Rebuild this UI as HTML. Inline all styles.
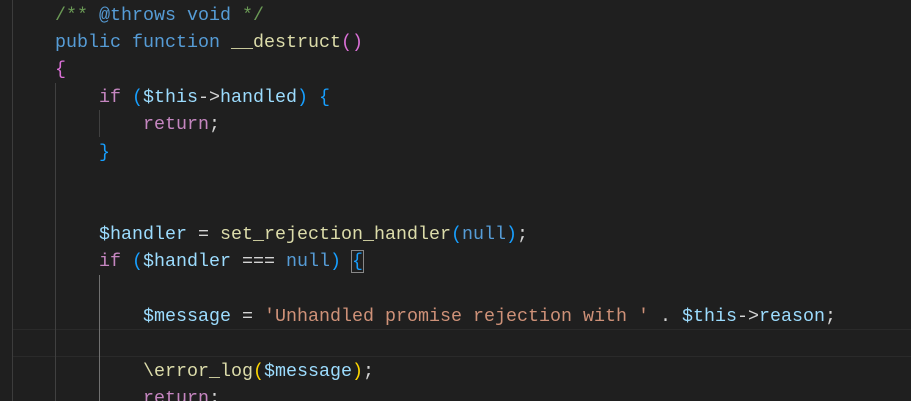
<!DOCTYPE html>
<html><head><meta charset="utf-8"><style>
html,body{margin:0;padding:0;background:#1f1f1f;width:911px;height:401px;overflow:hidden}
.ed{position:relative;width:911px;height:401px;font-family:"Liberation Mono",monospace;font-size:18.33px;}
.l{position:absolute;left:11px;height:27.4px;line-height:27.4px;white-space:pre;color:#d4d4d4;margin-top:1.5px}
.g{position:absolute;width:1px;background:#404040}
.c{color:#6a9955}.k{color:#569cd6}.f{color:#dcdcaa}.p{color:#da70d6}.b{color:#179fff}.y{color:#ffd700}
.m{color:#c586c0}.v{color:#9cdcfe}.s{color:#ce9178}
.cur{position:absolute;left:12px;right:0;top:329px;height:26px;border-top:1.5px solid #2a2a2a;border-bottom:1.5px solid #2a2a2a}
.bx{outline:1px solid #888;}
</style></head><body><div class="ed">
<div class="cur"></div>
<div class="g" style="left:12px;top:0;height:401px;background:#3c3c3c"></div>
<div class="g" style="left:55px;top:83px;height:318px"></div>
<div class="g" style="left:99px;top:110px;height:27px"></div>
<div class="g" style="left:99px;top:275px;height:126px;background:#707070"></div>
<div class="l" style="top:0px">    <span class="c">/** </span><span class="k">@throws</span><span class="c"> </span><span class="k">void</span><span class="c"> */</span></div>
<div class="l" style="top:27.4px">    <span class="k">public function</span> <span class="f">__destruct</span><span class="p">()</span></div>
<div class="l" style="top:54.8px">    <span class="p">{</span></div>
<div class="l" style="top:82.2px">        <span class="m">if</span> <span class="b">(</span><span class="v">$this</span>-&gt;<span class="v">handled</span><span class="b">)</span> <span class="b">{</span></div>
<div class="l" style="top:109.6px">            <span class="m">return</span>;</div>
<div class="l" style="top:137px">        <span class="b">}</span></div>
<div class="l" style="top:219.2px">        <span class="v">$handler</span> = <span class="f">set_rejection_handler</span><span class="b">(</span><span class="k">null</span><span class="b">)</span>;</div>
<div class="l" style="top:246.6px">        <span class="m">if</span> <span class="b">(</span><span class="v">$handler</span> === <span class="k">null</span><span class="b">)</span> <span class="b bx">{</span></div>
<div class="l" style="top:301.4px">            <span class="v">$message</span> = <span class="s">'Unhandled promise rejection with '</span> . <span class="v">$this</span>-&gt;<span class="v">reason</span>;</div>
<div class="l" style="top:356.2px">            <span class="f">\error_log</span><span class="y">(</span><span class="v">$message</span><span class="y">)</span>;</div>
<div class="l" style="top:383.6px">            <span class="m">return</span>;</div>
</div></body></html>
